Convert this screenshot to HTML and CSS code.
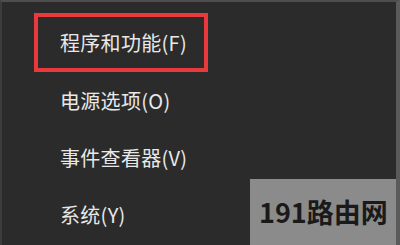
FILE: index.html
```html
<!DOCTYPE html>
<html lang="zh-CN">
<head>
  <meta charset="UTF-8">
  <title>快捷菜单</title>
  <link rel="stylesheet" href="styles.css">
</head>
<body>

  <div class="screen">
    <!-- 右键菜单 -->
    <ul class="menu">
      <li class="menu-item selected">程序和功能(F)</li>
      <li class="menu-item">电源选项(O)</li>
      <li class="menu-item">事件查看器(V)</li>
      <li class="menu-item">系统(Y)</li>
    </ul>

    <div class="watermark">191路由网</div>
  </div>

</body>
</html>
```

FILE: styles.css
```css
body {
  margin: 0;
  padding: 0;
  background: #2b2b2b;
  font-family: "Noto Sans CJK SC", "Microsoft YaHei", sans-serif;
}
.screen {
  position: relative;
  width: 400px;
  height: 245px;
  box-sizing: border-box;
  border-top: 2px solid #4e4e4e;
  border-left: 2px solid #3c3c3c;
  border-right: 4px solid #5a5a5a;
  background: #2b2b2b;
  overflow: hidden;
}
.menu {
  list-style: none;
  margin: 0;
  padding: 11px 0 0 32px;
  display: flex;
  flex-direction: column;
}
.menu-item {
  height: 57px;
  line-height: 57px;
  padding-left: 26px;
  color: #e8e8e8;
  font-size: 20px;
  letter-spacing: 0.3px;
}
.menu-item.selected {
  width: 144px;
  height: 51px;
  line-height: 51px;
  padding-left: 22px;
  border: 4px solid #e8393d;
  white-space: nowrap;
}
.watermark {
  position: absolute;
  left: 248px;
  top: 177px;
  width: 148px;
  height: 68px;
  background: #8b8b8b;
  color: #1a1a1a;
  font-family: "Noto Sans CJK SC", sans-serif;
  font-size: 27px;
  font-weight: bold;
  line-height: 66px;
  padding-left: 9px;
  box-sizing: border-box;
  white-space: nowrap;
}
```
